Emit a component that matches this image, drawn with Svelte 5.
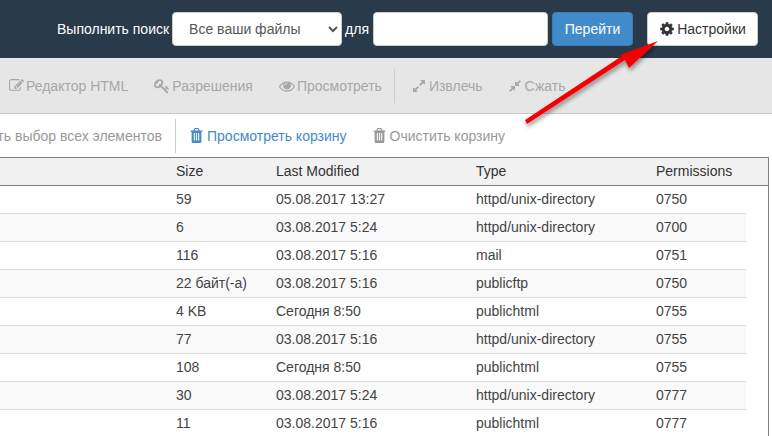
<script>
  const rows = [
    ['59', '05.08.2017 13:27', 'httpd/unix-directory', '0750'],
    ['6', '03.08.2017 5:24', 'httpd/unix-directory', '0700'],
    ['116', '03.08.2017 5:16', 'mail', '0751'],
    ['22 байт(-а)', '03.08.2017 5:16', 'publicftp', '0750'],
    ['4 KB', 'Сегодня 8:50', 'publichtml', '0755'],
    ['77', '03.08.2017 5:16', 'httpd/unix-directory', '0755'],
    ['108', 'Сегодня 8:50', 'publichtml', '0755'],
    ['30', '03.08.2017 5:24', 'httpd/unix-directory', '0777'],
    ['11', '03.08.2017 5:16', 'publichtml', '0777']
  ];
  const ic = {
    cog: 'M1152 896q0-106-75-181t-181-75-181 75-75 181 75 181 181 75 181-75 75-181zm512-109v222q0 12-8 23t-20 13l-185 28q-19 54-39 91 35 50 107 138 10 12 10 25t-9 23q-27 37-99 108t-94 71q-12 0-26-9l-138-108q-44 23-91 38-16 136-29 186-7 28-36 28h-222q-14 0-24.500-8.500t-11.500-21.500l-28-184q-49-16-90-37l-141 107q-10 9-25 9-14 0-25-11-126-114-165-168-7-10-7-23 0-12 8-23 15-21 51-66.500t54-70.500q-27-50-41-99l-183-27q-13-2-21-12.500t-8-23.500v-222q0-12 8-23t19-13l186-28q14-46 39-92-40-57-107-138-10-12-10-24 0-10 9-23 26-36 98.500-107.500t94.500-71.500q13 0 26 10l138 107q44-23 91-38 16-136 29-186 7-28 36-28h222q14 0 24.500 8.500t11.500 21.500l28 184q49 16 90 37l142-107q9-9 24-9 13 0 25 10 129 119 165 170 7 8 7 22 0 12-8 23-15 21-51 66.500t-54 70.500q26 50 41 98l183 28q13 2 21 12.500t8 23.500z',
    trash: 'M704 1376v-704q0-14-9-23t-23-9h-64q-14 0-23 9t-9 23v704q0 14 9 23t23 9h64q14 0 23-9t9-23zm256 0v-704q0-14-9-23t-23-9h-64q-14 0-23 9t-9 23v704q0 14 9 23t23 9h64q14 0 23-9t9-23zm256 0v-704q0-14-9-23t-23-9h-64q-14 0-23 9t-9 23v704q0 14 9 23t23 9h64q14 0 23-9t9-23zm-544-992h448l-48-117q-7-9-17-11h-317q-10 2-17 11zm928 32v64q0 14-9 23t-23 9h-96v948q0 83-47 143.500t-113 60.500h-832q-66 0-113-58.500t-47-141.500v-952h-96q-14 0-23-9t-9-23v-64q0-14 9-23t23-9h309l70-167q15-37 54-63t79-26h320q40 0 79 26t54 63l70 167h309q14 0 23 9t9 23z',
    edit: 'M888 1184l116-116-152-152-116 116v56h96v96h56zm440-720q-16-16-33 1l-350 350q-17 17-1 33t33-1l350-350q17-17 1-33zm80 594v190q0 119-84.500 203.500t-203.500 84.500h-832q-119 0-203.500-84.500t-84.500-203.500v-832q0-119 84.500-203.500t203.500-84.500h832q63 0 117 25 15 7 18 23 3 17-9 29l-49 49q-14 14-32 8-23-6-45-6h-832q-66 0-113 47t-47 113v832q0 66 47 113t113 47h832q66 0 113-47t47-113v-126q0-13 9-22l64-64q15-15 35-7t20 29zm-96-738l288 288-672 672h-288v-288zm444 132l-92 92-288-288 92-92q28-28 68-28t68 28l152 152q28 28 28 68t-28 68z',
    eye: 'M1664 960q-152-236-381-353 61 104 61 225 0 185-131.500 316.500t-316.500 131.500-316.500-131.500-131.500-316.500q0-121 61-225-229 117-381 353 133 205 333.500 326.500t434.500 121.500 434.500-121.500 333.500-326.500zm-720-384q0-20-14-34t-34-14q-125 0-214.500 89.500t-89.500 214.500q0 20 14 34t34 14 34-14 14-34q0-86 61-147t147-61q20 0 34-14t14-34zm848 384q0 34-20 69-140 230-376.500 368.500t-499.500 138.500-499.500-139-376.500-368q-20-35-20-69t20-69q140-229 376.500-368t499.500-139 499.500 139 376.500 368q20 35 20 69z',
    key: 'M832 512q0-80-56-136t-136-56-136 56-56 136q0 42 19 83-41-19-83-19-80 0-136 56t-56 136 56 136 136 56 136-56 56-136q0-42-19-83 41 19 83 19 80 0 136-56t56-136zm851 704q0 17-49 66t-66 49q-9 0-28.500-16t-36.500-33-38.500-40-24.500-26l-96 96 220 220q28 28 28 68 0 42-39 81t-81 39q-40 0-68-28l-671-671q-176 131-365 131-163 0-265.500-102.500t-102.500-265.500q0-160 95-313t248-248 313-95q163 0 265.500 102.500t102.500 265.500q0 189-131 365l355 355 96-96q-3-3-26-24.500t-40-38.500-33-36.500-16-28.500q0-17 49-66t66-49q13 0 23 10 6 6 46 44.500t82 79.500 86.500 86 73 78 28.500 41z',
    expand: 'M883 1056q0 13-10 23l-332 332 144 144q19 19 19 45t-19 45-45 19h-448q-26 0-45-19t-19-45v-448q0-26 19-45t45-19 45 19l144 144 332-332q10-10 23-10t23 10l114 114q10 10 10 23zm781-864v448q0 26-19 45t-45 19-45-19l-144-144-332 332q-10 10-23 10t-23-10l-114-114q-10-10-10-23t10-23l332-332-144-144q-19-19-19-45t19-45 45-19h448q26 0 45 19t19 45z',
    compress: 'M896 960v448q0 26-19 45t-45 19-45-19l-144-144-332 332q-10 10-23 10t-23-10l-114-114q-10-10-10-23t10-23l332-332-144-144q-19-19-19-45t19-45 45-19h448q26 0 45 19t19 45zm755-672q0 13-10 23l-332 332 144 144q19 19 19 45t-19 45-45 19h-448q-26 0-45-19t-19-45v-448q0-26 19-45t45-19 45 19l144 144 332-332q10-10 23-10t23 10l114 114q10 10 10 23z'
  };
  const tools = [
    { icon: ic.edit, label: 'Редактор HTML', cls: 'mid' },
    { icon: ic.key, label: 'Разрешения', cls: 'big' },
    { icon: ic.eye, label: 'Просмотреть', cls: 'big' }
  ];
  const tools2 = [
    { icon: ic.expand, label: 'Извлечь', cls: '' },
    { icon: ic.compress, label: 'Сжать', cls: '' }
  ];
</script>

<div class="page">
  <header class="top">
    <span class="lbl">Выполнить поиск</span>
    <select class="sel"><option>Все ваши файлы</option></select>
    <span class="lbl">для</span>
    <input class="inp" type="text" />
    <button class="go">Перейти</button>
    <button class="cfg"><svg class="ico cog" viewBox="0 0 1792 1792"><path d={ic.cog} /></svg>Настройки</button>
  </header>

  <nav class="bar1">
    {#each tools as t}
      <span class="tool {t.cls}"><svg class="ico" viewBox="0 0 1792 1792"><path d={t.icon} /></svg>{t.label}</span>
    {/each}
    <span class="sep1"></span>
    {#each tools2 as t}
      <span class="tool"><svg class="ico" viewBox="0 0 1792 1792"><path d={t.icon} /></svg>{t.label}</span>
    {/each}
  </nav>

  <nav class="bar2">
    <div class="clip"><span>Отменить выбор всех элементов</span></div>
    <span class="sep2"></span>
    <span class="act link"><svg class="bin" viewBox="128 128 1536 1536" preserveAspectRatio="none"><path d={ic.trash} /></svg>Просмотреть корзину</span>
    <span class="act"><svg class="bin" viewBox="128 128 1536 1536" preserveAspectRatio="none"><path d={ic.trash} /></svg>Очистить корзину</span>
  </nav>

  <section class="tbl">
    <div class="row head">
      <div></div><div>Size</div><div>Last Modified</div><div>Type</div><div>Permissions</div>
    </div>
    {#each rows as r}
      <div class="row body">
        <div></div><div>{r[0]}</div><div>{r[1]}</div><div>{r[2]}</div><div>{r[3]}</div>
      </div>
    {/each}
  </section>

  <svg class="arrow" width="772" height="436" viewBox="0 0 772 436">
    <defs>
      <filter id="sh" x="-20%" y="-20%" width="150%" height="150%">
        <feDropShadow dx="1" dy="3" stdDeviation="2" flood-color="#000" flood-opacity="0.4" />
      </filter>
    </defs>
    <polygon filter="url(#sh)" fill="#f50000" points="658,41 629,68 625,60 527,124 525,120 622,56 620,55" />
  </svg>
</div>

<style>
  :global(body) { margin: 0; background: #fff; }
  .page {
    position: relative;
    width: 772px;
    height: 436px;
    overflow: hidden;
    font-family: "Liberation Sans", Arial, sans-serif;
    font-size: 14px;
    color: #333;
  }
  .ico { width: 14px; height: 14px; fill: currentColor; flex: none; }
  .ico.cog { width: 16px; height: 16px; }
  .bin { width: 13px; height: 15px; fill: currentColor; flex: none; }

  .top {
    height: 58px;
    background: #293a4a;
    display: flex;
    align-items: center;
    padding-left: 57px;
    box-sizing: border-box;
  }
  .lbl { color: #fff; margin-right: 3px; }
  .sel {
    width: 170px;
    height: 34px;
    margin-right: 3px;
    padding: 6px 12px;
    font: inherit;
    color: #555;
    background: #fff;
    border: 1px solid #ccc;
    border-radius: 4px;
    box-sizing: border-box;
  }
  .inp {
    width: 175px;
    height: 34px;
    margin-left: 1px;
    box-sizing: border-box;
    border: 1px solid #ccc;
    border-radius: 4px;
    background: #fff;
  }
  .go {
    width: 81px;
    height: 34px;
    margin-left: 4px;
    font: inherit;
    color: #fff;
    background: #428bca;
    border: 1px solid #357ebd;
    border-radius: 4px;
    box-sizing: border-box;
    padding: 0;
  }
  .cfg {
    width: 111px;
    height: 34px;
    margin-left: 14px;
    font: inherit;
    color: #333;
    background: #fff;
    border: 1px solid #ccc;
    border-radius: 4px;
    box-sizing: border-box;
    padding: 0;
    display: flex;
    align-items: center;
    justify-content: center;
    gap: 2px;
  }

  .bar1 {
    height: 56px;
    box-sizing: border-box;
    background: #e6e6e6;
    border-bottom: 1px solid #c9c9c9;
    display: flex;
    align-items: center;
    padding-left: 9px;
    color: #a8a8a8;
    white-space: nowrap;
  }
  .tool { display: flex; align-items: center; gap: 3px; margin-right: 26px; }
  .tool.mid { gap: 2px; }
  .tool.mid .ico { width: 15px; height: 15px; }
  .tool.big { gap: 2px; }
  .tool.big .ico { width: 16px; height: 16px; }
  .sep1 {
    width: 1px;
    height: 34px;
    background: #cfcfcf;
    margin: 0 18px 0 -14px;
  }
  .sep1 + .tool { margin-left: -1px; margin-right: 25px; }

  .bar2 {
    height: 43px;
    box-sizing: border-box;
    display: flex;
    align-items: center;
    color: #999;
    white-space: nowrap;
  }
  .clip { width: 162px; flex: none; display: flex; justify-content: flex-end; }
  .clip span { flex: none; }
  .sep2 { width: 1px; height: 34px; background: #ccc; margin: 0 14px 0 13px; }
  .act { display: flex; align-items: center; gap: 4px; margin-right: 26px; }
  .link { color: #428bca; }

  .tbl {
    width: 769px;
    box-sizing: border-box;
    border-top: 1px solid #808080;
    border-right: 1px solid #808080;
  }
  .row {
    display: grid;
    grid-template-columns: 168px 100px 200px 180px 1fr;
    box-sizing: border-box;
    height: 28px;
    line-height: 27px;
  }
  .row > div { padding-left: 8px; white-space: nowrap; }
  .head {
    background: #f1f1f1;
    border-bottom: 1px solid #808080;
    color: #333;
  }
  .body { width: 746px; border-bottom: 1px solid #ddd; color: #444; }
  .body:nth-child(odd) { background: #f9f9f9; }

  .arrow { position: absolute; left: 0; top: 0; pointer-events: none; }
</style>
